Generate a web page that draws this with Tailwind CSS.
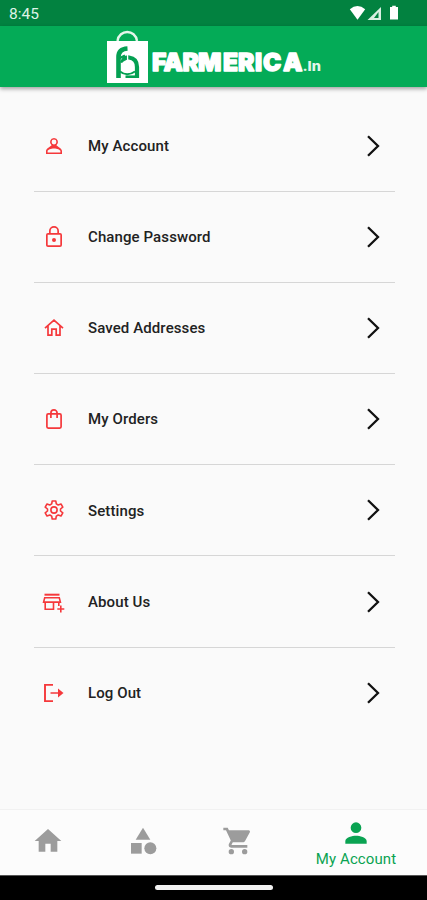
<!DOCTYPE html>
<html lang="en">
<head>
    <meta charset="UTF-8">
    <meta name="viewport" content="width=device-width, initial-scale=1.0">
    <script src="https://cdn.jsdelivr.net/npm/@tailwindcss/browser@4"></script>
    <title>Farmerica - My Account</title>
</head>
<body class="bg-[#fafafa] font-['Roboto',sans-serif]">

    <div class="flex flex-col w-full h-[900px] overflow-hidden">

        <!-- Status bar -->
        <div class="flex items-center justify-between h-[26px] shrink-0 pl-[9px] pr-[28px] bg-[#028240]">
            <span class="text-[15.5px] leading-none text-[#dff3e6] pt-[3px]">8:45</span>
            <svg class="w-[50px] h-[16px]" viewBox="0 0 50 16" fill="#fff">
                <path d="M.8 4.2Q8.500-2 16.200 4.200L8.500 14.800z"/>
                <path d="M32 2v13H18.500z" fill="#d9efe2"/>
                <path d="M29.500 7v6h-4.500z" fill="#028240"/>
                <path d="M41 2h2.200V.8h3.600V2H49v12.500h-8z"/>
            </svg>
        </div>

        <!-- Header -->
        <header class="relative z-10 flex justify-center h-[61px] shrink-0 bg-[#04ab57] shadow-[0_2px_4px_rgba(0,0,0,0.35)]">
            <svg class="w-[216px] h-[61px]" viewBox="106 26 216 61">
                <path d="M117.500 41C119 29 135.500 29 137 41" fill="none" stroke="#e4f6ea" stroke-width="2.400"/>
                <path d="M107 41h41v42h-41z" fill="#fff"/>
                <g fill="none" stroke="#04a052">
                    <path d="M118.500 78V57Q118.500 49 127.500 48.500" stroke-width="4.600"/>
                    <path d="M119 58.500L125 55.500" stroke-width="2.200"/>
                    <path d="M122 63Q124 57 129 57.500Q137 58.500 137 67V78" stroke-width="4.200"/>
                    <path d="M120 71.500Q127 77 135 71.500" stroke-width="2"/>
                    <path d="M125.500 76.700h13" stroke-width="2.600"/>
                </g>
                <circle cx="127.300" cy="66.500" r="6.300" fill="#fff"/>
                <path d="M127.600 54v8" stroke="#fff" stroke-width="1.300"/>
                <text x="152 163.500 182.500 198 223 238 255 263 283" y="70.500" font-family="Inter" font-weight="900" font-size="24.500" fill="#fff" stroke="#fff" stroke-width="1.300" stroke-linejoin="round">FARMERICA</text>
                <text x="302.500" y="70.500" textLength="18.500" lengthAdjust="spacingAndGlyphs" font-family="Inter" font-weight="800" font-size="13" fill="#e4f6ea">.In</text>
            </svg>
        </header>

        <!-- Menu -->
        <main class="flex-1 pt-[13.500px] pl-[33.500px] pr-8 text-[15px] font-medium text-[#222]">
            <div class="flex items-center h-[91.200px] pl-[8.500px] pr-[15px] border-b border-[#d6d6d6]">
                <svg class="w-6 h-6 mr-[22px]" viewBox="0 0 24 24" fill="#f5383b"><path d="M12 5.600a2.400 2.400 0 1 1 0 4.800 2.400 2.400 0 0 1 0-4.800m0 9c2.970 0 6.400 1.460 6.400 2.400v1.400H5.600V17c0-.94 3.430-2.400 6.400-2.400M12 4a4 4 0 0 0-2.400 7.200C7.200 13.600 4 14.500 4 17v3h16v-3c0-2.500-3.200-3.400-5.600-5.800A4 4 0 0 0 12 4"/></svg>
                <span class="flex-1 pt-[1px] tracking-[0.1px]">My Account</span>
                <svg class="w-[13px] h-[22px]" viewBox="0 0 13 22" fill="none" stroke="#111" stroke-width="2.300"><path d="M1 1.200l10 9.800-10 9.800"/></svg>
            </div>
            <div class="flex items-center h-[91.200px] pl-[8.500px] pr-[15px] border-b border-[#d6d6d6]">
                <svg class="w-6 h-6 mr-[22px]" viewBox="0 0 24 24" fill="#f5383b"><path d="M18 8h-1V6A5 5 0 0 0 7 6v2H6a2 2 0 0 0-2 2v10c0 1.100.9 2 2 2h12a2 2 0 0 0 2-2V10a2 2 0 0 0-2-2M8.700 6a3.300 3.300 0 0 1 6.600 0v2H8.700zM18.300 20.300H5.700V9.700h12.600zM12 17a2 2 0 1 0 0-4 2 2 0 0 0 0 4"/></svg>
                <span class="flex-1 pt-[1px] tracking-[0.1px]">Change Password</span>
                <svg class="w-[13px] h-[22px]" viewBox="0 0 13 22" fill="none" stroke="#111" stroke-width="2.300"><path d="M1 1.200l10 9.800-10 9.800"/></svg>
            </div>
            <div class="flex items-center h-[91.200px] pl-[8.500px] pr-[15px] border-b border-[#d6d6d6]">
                <svg class="w-6 h-6 mr-[22px]" viewBox="0 0 24 24" fill="none" stroke="#f5383b" stroke-width="1.700"><path d="M3 12.200l9-8 9 8M6 10v9.200h3.800v-6h4.400v6H18V10"/></svg>
                <span class="flex-1 pt-[1px] tracking-[0.1px]">Saved Addresses</span>
                <svg class="w-[13px] h-[22px]" viewBox="0 0 13 22" fill="none" stroke="#111" stroke-width="2.300"><path d="M1 1.200l10 9.800-10 9.800"/></svg>
            </div>
            <div class="flex items-center h-[91.200px] pl-[8.500px] pr-[15px] border-b border-[#d6d6d6]">
                <svg class="w-6 h-6 mr-[22px]" viewBox="0 0 24 24" fill="none" stroke="#f5383b" stroke-width="1.700"><rect x="4.900" y="6.900" width="14.200" height="14.200" rx="1.300"/><path d="M8.900 11V6a3.100 3.100 0 0 1 6.200 0v5"/></svg>
                <span class="flex-1 pt-[1px] tracking-[0.1px]">My Orders</span>
                <svg class="w-[13px] h-[22px]" viewBox="0 0 13 22" fill="none" stroke="#111" stroke-width="2.300"><path d="M1 1.200l10 9.800-10 9.800"/></svg>
            </div>
            <div class="flex items-center h-[91.200px] pl-[8.500px] pr-[15px] border-b border-[#d6d6d6]">
                <svg class="w-6 h-6 mr-[22px]" viewBox="0 0 24 24" fill="none" stroke="#f5383b" stroke-width="1.600" stroke-linejoin="round"><path d="M10.200 3h3.600l.5 2.900 1.900 1.100 2.800-1 1.800 3.100-2.300 1.900v2l2.300 1.900-1.800 3.100-2.800-1-1.900 1.100-.5 2.900h-3.600l-.5-2.900L7.800 17l-2.800 1-1.800-3.100L5.500 13v-2L3.200 9.100 5 6l2.800 1 1.900-1.100z"/><circle cx="12" cy="12" r="3.100"/></svg>
                <span class="flex-1 pt-[1px] tracking-[0.1px]">Settings</span>
                <svg class="w-[13px] h-[22px]" viewBox="0 0 13 22" fill="none" stroke="#111" stroke-width="2.300"><path d="M1 1.200l10 9.800-10 9.800"/></svg>
            </div>
            <div class="flex items-center h-[91.200px] pl-[8.500px] pr-[15px] border-b border-[#d6d6d6]">
                <svg class="w-6 h-6 mr-[22px]" viewBox="0 0 24 24" fill="none" stroke="#f5383b" stroke-width="1.600"><path d="M2.500 4.700h15" stroke-width="2"/><path d="M2.700 7.800h14.600l1.100 4.300H1.600zM3.200 12v7.300h8.300V12M16.800 12v4M18.800 15.500v7M15.300 19h7"/></svg>
                <span class="flex-1 pt-[1px] tracking-[0.1px]">About Us</span>
                <svg class="w-[13px] h-[22px]" viewBox="0 0 13 22" fill="none" stroke="#111" stroke-width="2.300"><path d="M1 1.200l10 9.800-10 9.800"/></svg>
            </div>
            <div class="flex items-center h-[91.200px] pl-[8.500px] pr-[15px]">
                <svg class="w-6 h-6 mr-[22px]" viewBox="0 0 24 24" fill="none" stroke="#f5383b" stroke-width="1.900"><path d="M11 3.900H3v16.200h8"/><path d="M8.500 12h9" stroke-width="1.500"/><path d="M16 7.500v9l5.500-4.500z" fill="#f5383b" stroke="none"/></svg>
                <span class="flex-1 pt-[1px] tracking-[0.1px]">Log Out</span>
                <svg class="w-[13px] h-[22px]" viewBox="0 0 13 22" fill="none" stroke="#111" stroke-width="2.300"><path d="M1 1.200l10 9.800-10 9.800"/></svg>
            </div>
        </main>

        <!-- Bottom navigation -->
        <nav class="flex h-[66px] shrink-0 border-t border-[#f1f1f1] bg-[#fcfcfc]">
            <a class="flex justify-center items-center w-[95px] pb-[3px]">
                <svg class="w-8 h-8" viewBox="0 0 24 24" fill="#9c9c9c"><path d="M10 20v-6h4v6h5v-8h3L12 3 2 12h3v8z"/></svg>
            </a>
            <a class="flex justify-center items-center w-[95px] pb-[3px]">
                <svg class="w-8 h-8" viewBox="0 0 24 24" fill="#9c9c9c"><path d="M12 2l-5.500 9h11z"/><circle cx="17.500" cy="17.500" r="4.500"/><path d="M3 13.500h8v8H3z"/></svg>
            </a>
            <a class="flex justify-center items-center w-[95px] pb-[3px]">
                <svg class="w-8 h-8" viewBox="0 0 24 24" fill="#9c9c9c"><path d="M7 18a2 2 0 1 0 0 4 2 2 0 0 0 0-4M1 2v2h2l3.600 7.590-1.350 2.450C4.520 15.370 5.480 17 7 17h12v-2H7.420a.25.250 0 0 1-.25-.25l.03-.12.900-1.630h7.450c.75 0 1.410-.41 1.750-1.030l3.580-6.490A1 1 0 0 0 20 4H5.210l-.94-2zm16 16a2 2 0 1 0 0 4 2 2 0 0 0 0-4"/></svg>
            </a>
            <a class="flex flex-col items-center flex-1 pt-[7px] text-[#0aa352]">
                <svg class="w-8 h-8" viewBox="0 0 24 24" fill="currentColor"><path d="M12 12a4 4 0 1 0 0-8 4 4 0 0 0 0 8m0 2c-2.670 0-8 1.340-8 4v2h16v-2c0-2.660-5.330-4-8-4"/></svg>
                <span class="pt-[1px] text-[15px] leading-[18px] tracking-[0.1px]">My Account</span>
            </a>
        </nav>

        <!-- Gesture bar -->
        <div class="flex justify-center h-[25.500px] shrink-0 pt-[9.500px] bg-black border-t border-[#555]">
            <div class="w-[118px] h-[4.500px] rounded-full bg-[#f2f2f2]"></div>
        </div>
    </div>
</body>
</html>
